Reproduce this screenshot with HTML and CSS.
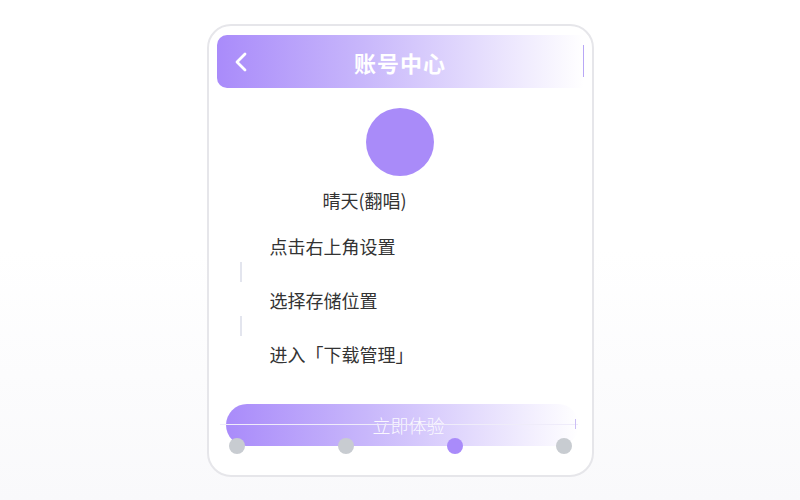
FILE: index.html
```html
<!DOCTYPE html>
<html lang="zh-CN">
<head>
    <meta charset="UTF-8">
    <meta name="viewport" content="width=device-width, initial-scale=1.0">
    <title>账号中心</title>
    <link rel="stylesheet" href="styles.css">
</head>
<body>
    <div class="phone">
        <!-- Header -->
        <div class="header">
            <svg class="back" width="14" height="20" viewBox="0 0 14 20">
                <polyline points="11,2 3,10 11,18" fill="none" stroke="#fff" stroke-width="2.8" stroke-linecap="round" stroke-linejoin="round"/>
            </svg>
            <h1 class="title">账号中心</h1>
        </div>

        <!-- Profile -->
        <div class="avatar"></div>
        <p class="name">晴天(翻唱)</p>

        <!-- Steps -->
        <div class="steps">
            <p class="step">点击右上角设置</p>
            <div class="connector"></div>
            <p class="step">选择存储位置</p>
            <div class="connector"></div>
            <p class="step">进入「下载管理」</p>
        </div>

        <!-- Call to action -->
        <div class="cta">
            <button type="button" class="cta-button">立即体验</button>
            <div class="cta-line"></div>
            <div class="cta-tick"></div>
            <div class="dots">
                <span class="dot"></span>
                <span class="dot"></span>
                <span class="dot active"></span>
                <span class="dot"></span>
            </div>
        </div>
    </div>
</body>
</html>
```

FILE: styles.css
```css
/* General reset */
* {
    margin: 0;
    padding: 0;
    box-sizing: border-box;
}

html, body {
    height: 100%;
}

body {
    font-family: "Noto Sans CJK SC", "Noto Sans", sans-serif;
    background: linear-gradient(180deg, #ffffff 50%, #f9f9fb 100%);
    color: #333333;
    overflow: hidden;
}

/* Phone frame */
.phone {
    width: 387px;
    height: 453px;
    margin: 24px auto 0;
    padding: 9px 8px;
    border: 2px solid #e6e6ea;
    border-radius: 24px;
    background-color: #ffffff;
    display: flex;
    flex-direction: column;
}

/* Header bar */
.header {
    position: relative;
    height: 53px;
    border-radius: 10px 0 0 10px;
    background: linear-gradient(90deg, #a98bfa 0%, #c8b7fb 40%, #ffffff 100%);
    display: flex;
    align-items: center;
    justify-content: center;
}

.header::after {
    content: "";
    position: absolute;
    right: 0;
    top: 10px;
    bottom: 11px;
    width: 1px;
    background-color: #b8a7f6;
}

.back {
    position: absolute;
    left: 17px;
    top: 17px;
}

.title {
    font-size: 22px;
    font-weight: 700;
    color: #ffffff;
    line-height: 1;
    letter-spacing: 1px;
}

/* Profile */
.avatar {
    width: 68px;
    height: 68px;
    border-radius: 50%;
    background-color: #a98bf9;
    margin: 20px auto 0;
}

.name {
    margin-top: 12px;
    padding-left: 106px;
    font-size: 18px;
    line-height: 24px;
}

/* Steps */
.steps {
    margin-top: 22px;
    padding-left: 23px;
}

.step {
    padding-left: 30px;
    font-size: 18px;
    line-height: 24px;
}

.connector {
    width: 2px;
    height: 20px;
    margin: 4px 0 6px;
    background-color: #e3e5ee;
}

/* Call to action */
.cta {
    position: relative;
    margin-top: 38px;
    height: 50px;
}

.cta-button {
    display: block;
    width: 353px;
    height: 42px;
    margin-left: 9px;
    padding-left: 13px;
    border: none;
    border-radius: 21px;
    background: linear-gradient(90deg, #a98bfa 0%, #c8b7fb 40%, #ffffff 100%);
    color: rgba(255, 255, 255, 0.92);
    font-family: inherit;
    font-size: 18px;
    font-weight: 300;
}

.cta-line {
    position: absolute;
    left: 3px;
    right: 6px;
    top: 20px;
    height: 1px;
    background-color: #efecfa;
}

.cta-tick {
    position: absolute;
    left: 358px;
    top: 15px;
    width: 1px;
    height: 10px;
    background-color: #cbbef5;
}

.dots {
    position: absolute;
    left: 12px;
    right: 12px;
    top: 34px;
    display: flex;
    justify-content: space-between;
}

.dot {
    width: 16px;
    height: 16px;
    border-radius: 50%;
    background-color: #c8ccd1;
}

.dot.active {
    background-color: #a98bfa;
}
```
